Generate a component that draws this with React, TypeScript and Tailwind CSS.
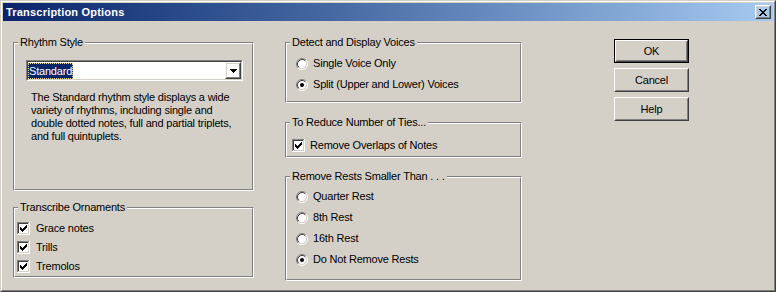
import React from "react";

const checkPix: [number, number][] = [
  [3, 5], [4, 6], [5, 7], [6, 6], [7, 5], [8, 4], [9, 3],
];

function CheckBox() {
  return (
    <svg width="13" height="13" viewBox="0 0 13 13" shapeRendering="crispEdges" className="shrink-0">
      <rect x="0" y="0" width="13" height="13" fill="#ffffff" />
      <path d="M0.5 12V0.5H12" stroke="#808080" fill="none" />
      <path d="M1.5 11V1.5H11" stroke="#404040" fill="none" />
      <path d="M0 12.5H12.5V0" stroke="#ffffff" fill="none" />
      <path d="M1 11.5H11.5V1" stroke="#d4d0c8" fill="none" />
      {checkPix.map(([x, y]) => (
        <rect key={x} x={x} y={y} width="1" height="3" fill="#000000" />
      ))}
    </svg>
  );
}

function Radio({ checked }: { checked?: boolean }) {
  return (
    <svg width="12" height="12" viewBox="0 0 12 12" className="shrink-0">
      <circle cx="6" cy="6" r="4.5" fill="#ffffff" />
      <path d="M2.11 9.89A5.5 5.5 0 0 1 9.89 2.11" stroke="#808080" fill="none" />
      <path d="M9.89 2.11A5.5 5.5 0 0 1 2.11 9.89" stroke="#ffffff" fill="none" />
      <path d="M2.82 9.18A4.5 4.5 0 0 1 9.18 2.82" stroke="#404040" fill="none" />
      <path d="M9.18 2.82A4.5 4.5 0 0 1 2.82 9.18" stroke="#d4d0c8" fill="none" />
      {checked && <circle cx="6" cy="6" r="2" fill="#000000" />}
    </svg>
  );
}

function Group({
  label,
  className,
  children,
}: {
  label: string;
  className: string;
  children?: React.ReactNode;
}) {
  return (
    <div
      className={`border border-t-[#808080] border-l-[#808080] border-r-white border-b-white ${className}`}
    >
      <div className="h-full border border-t-white border-l-white border-r-[#808080] border-b-[#808080] flex flex-col">
        <div className="-mt-[8px] -mb-[5px] ml-[3px] w-fit px-[2px] bg-[#d4d0c8] leading-[13px] whitespace-nowrap">
          {label}
        </div>
        {children}
      </div>
    </div>
  );
}

function CheckRow({ label }: { label: string }) {
  return (
    <div className="flex items-center h-[19px]">
      <CheckBox />
      <span className="ml-[6px] leading-[13px]">{label}</span>
    </div>
  );
}

function RadioRow({ label, checked }: { label: string; checked?: boolean }) {
  return (
    <div className="flex items-center h-[21px]">
      <Radio checked={checked} />
      <span className="ml-[5px] leading-[13px]">{label}</span>
    </div>
  );
}

function Raised({ children }: { children?: React.ReactNode }) {
  return (
    <div className="h-full w-full border border-t-white border-l-white border-r-[#404040] border-b-[#404040]">
      <div className="h-full w-full border border-t-[#d4d0c8] border-l-[#d4d0c8] border-r-[#808080] border-b-[#808080] flex items-center justify-center">
        {children}
      </div>
    </div>
  );
}

function Btn({ label, def }: { label: string; def?: boolean }) {
  return (
    <div className={`w-[75px] h-[24px] ${def ? "border border-black" : ""}`}>
      <Raised>
        <span className="leading-[13px]">{label}</span>
      </Raised>
    </div>
  );
}

export default function App() {
  return (
    <div className="w-[776px] h-[292px] bg-[#d4d0c8] text-black text-[11px] tracking-[-0.2px] font-['Liberation_Sans',Arial,sans-serif] border border-t-[#d4d0c8] border-l-[#d4d0c8] border-r-[#404040] border-b-[#404040]">
      <div className="h-full border border-t-white border-l-white border-r-[#808080] border-b-[#808080] p-[1px] flex flex-col">
        {/* Title bar */}
        <div className="h-[18px] shrink-0 flex items-center bg-gradient-to-r from-[#0a246a] to-[#a6caf0] pl-[3px] pr-[2px]">
          <span className="text-white font-bold text-[11px] leading-[13px] tracking-[0.2px]">
            Transcription Options
          </span>
          <div className="ml-auto w-[16px] h-[14px]">
            <Raised>
              <svg width="8" height="7" viewBox="0 0 8 7" shapeRendering="crispEdges">
                <path d="M0 0h2v1h-2zM6 0h2v1h-2zM1 1h2v1h-2zM5 1h2v1h-2zM2 2h4v1h-4zM3 3h2v1h-2zM2 4h4v1h-4zM1 5h2v1h-2zM5 5h2v1h-2zM0 6h2v1h-2zM6 6h2v1h-2z" fill="#000" />
              </svg>
            </Raised>
          </div>
        </div>

        {/* Body */}
        <div className="flex pl-[10px]">
          {/* Left column */}
          <div className="flex flex-col mt-[21px] w-[241px]">
            <Group label="Rhythm Style" className="h-[149px]">
              <div className="mt-[16px] ml-[11px] w-[217px] h-[21px] border border-t-[#808080] border-l-[#808080] border-r-white border-b-white">
                <div className="h-full border border-t-[#404040] border-l-[#404040] border-r-[#d4d0c8] border-b-[#d4d0c8] bg-white flex">
                  <div className="flex-1 flex items-center pl-[0px]">
                    <span className="bg-[#0a246a] text-white leading-[16px] h-[16px] px-[1px] outline outline-1 outline-dotted outline-[#e8d890] -outline-offset-1">
                      Standard
                    </span>
                  </div>
                  <div className="w-[16px] h-[17px]">
                    <Raised>
                      <svg width="7" height="4" viewBox="0 0 7 4" shapeRendering="crispEdges">
                        <path d="M0 0h7v1h-7zM1 1h5v1h-5zM2 2h3v1h-3zM3 3h1v1h-1z" fill="#000" />
                      </svg>
                    </Raised>
                  </div>
                </div>
              </div>
              <p className="mt-[10px] ml-[16px] leading-[13px]">
                The Standard rhythm style displays a wide
                <br />
                variety of rhythms, including single and
                <br />
                double dotted notes, full and partial triplets,
                <br />
                and full quintuplets.
              </p>
            </Group>
            <Group label="Transcribe Ornaments" className="h-[71px] mt-[16px]">
              <div className="mt-[10px] ml-[2px] flex flex-col">
                <CheckRow label="Grace notes" />
                <CheckRow label="Trills" />
                <CheckRow label="Tremolos" />
              </div>
            </Group>
          </div>

          {/* Middle column */}
          <div className="flex flex-col mt-[21px] ml-[31px] w-[237px]">
            <Group label="Detect and Display Voices" className="h-[61px]">
              <div className="mt-[9px] ml-[9px] flex flex-col">
                <RadioRow label="Single Voice Only" />
                <RadioRow label="Split (Upper and Lower) Voices" checked />
              </div>
            </Group>
            <Group label="To Reduce Number of Ties..." className="h-[36px] mt-[19px]">
              <div className="mt-[12px] ml-[5px] flex items-center h-[19px]">
                <CheckBox />
                <span className="ml-[5px] leading-[13px]">Remove Overlaps of Notes</span>
              </div>
            </Group>
            <Group label="Remove Rests Smaller Than . . ." className="h-[105px] mt-[18px]">
              <div className="mt-[8px] ml-[9px] flex flex-col">
                <RadioRow label="Quarter Rest" />
                <RadioRow label="8th Rest" />
                <RadioRow label="16th Rest" />
                <RadioRow label="Do Not Remove Rests" checked />
              </div>
            </Group>
          </div>

          {/* Right column */}
          <div className="flex flex-col gap-[5px] mt-[18px] ml-[92px]">
            <Btn label="OK" def />
            <Btn label="Cancel" />
            <Btn label="Help" />
          </div>
        </div>
      </div>
    </div>
  );
}
